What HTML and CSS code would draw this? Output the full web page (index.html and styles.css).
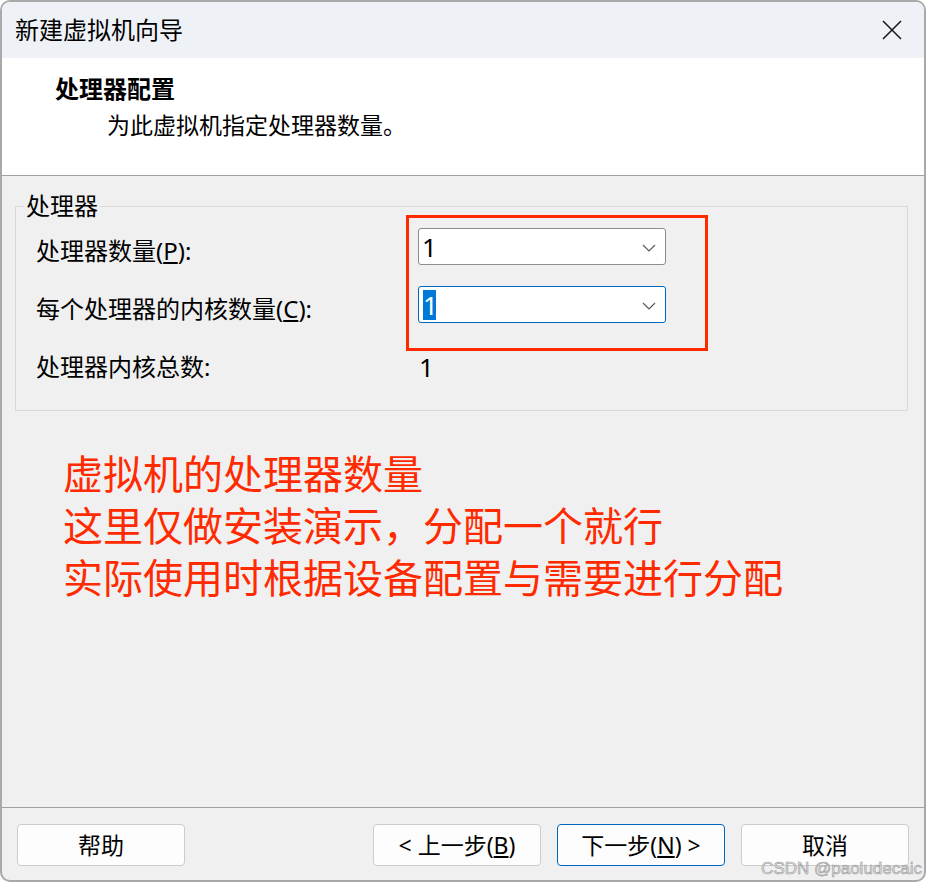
FILE: index.html
```html
<!DOCTYPE html>
<html lang="zh-CN">
<head>
    <meta charset="UTF-8">
    <title>新建虚拟机向导</title>
    <link rel="stylesheet" href="styles.css">
</head>
<body>
    <div class="window">
        <div class="titlebar">
            <span class="title">新建虚拟机向导</span>
            <svg class="close" width="20" height="20" viewBox="0 0 20 20">
                <path d="M1 1 L19 19 M19 1 L1 19" stroke="#1c1c1c" stroke-width="1.6" fill="none"/>
            </svg>
        </div>

        <div class="header">
            <h1>处理器配置</h1>
            <p>为此虚拟机指定处理器数量。</p>
        </div>

        <div class="content">
            <fieldset class="group">
                <legend>处理器</legend>
                <div class="form-grid">
                    <label class="field-label">处理器数量(<u>P</u>):</label>
                    <div class="combo">
                        <span class="value">1</span>
                        <svg class="chevron" width="14" height="8" viewBox="0 0 14 8">
                            <polyline points="1,1 7,7 13,1" stroke="#5a5a5a" stroke-width="1.2" fill="none"/>
                        </svg>
                    </div>

                    <label class="field-label">每个处理器的内核数量(<u>C</u>):</label>
                    <div class="combo focused">
                        <span class="value selected">1</span>
                        <svg class="chevron" width="14" height="8" viewBox="0 0 14 8">
                            <polyline points="1,1 7,7 13,1" stroke="#5a5a5a" stroke-width="1.2" fill="none"/>
                        </svg>
                    </div>

                    <span>处理器内核总数:</span>
                    <span class="total">1</span>
                </div>
            </fieldset>

            <!-- annotation drawn over the dialog -->
            <div class="mark-box"></div>

            <div class="note">
                <div>虚拟机的处理器数量</div>
                <div>这里仅做安装演示，分配一个就行</div>
                <div>实际使用时根据设备配置与需要进行分配</div>
            </div>
        </div>

        <div class="footer">
            <button>帮助</button>
            <div class="spacer"></div>
            <button>&lt; 上一步(<u>B</u>)</button>
            <button class="default">下一步(<u>N</u>) &gt;</button>
            <button>取消</button>
        </div>

        <div class="watermark">CSDN @paoludecaic</div>
    </div>
</body>
</html>
```

FILE: styles.css
```css
body {
    margin: 0;
    background-color: #ffffff;
    font-family: "Noto Sans", "Noto Sans CJK SC", sans-serif;
    color: #000000;
}

.window {
    position: relative;
    box-sizing: border-box;
    width: 926px;
    height: 882px;
    border: 2px solid #a9a9a9;
    border-radius: 10px;
    overflow: hidden;
    background-color: #f0f0f0;
    display: flex;
    flex-direction: column;
}

/* Title bar */
.titlebar {
    height: 56px;
    background-color: #eef2f6;
    display: flex;
    align-items: center;
    justify-content: space-between;
    padding: 0 22px 0 13px;
}

.title {
    font-size: 24px;
    line-height: 30px;
}

.close {
    display: block;
}

/* Header */
.header {
    background-color: #ffffff;
    height: 118px;
    box-sizing: border-box;
    border-bottom: 1px solid #a0a0a0;
    padding-top: 16px;
}

.header h1 {
    margin: 0 0 0 53px;
    font-size: 24px;
    line-height: 30px;
    font-weight: bold;
}

.header p {
    margin: 6px 0 0 105px;
    font-size: 23px;
    line-height: 30px;
}

/* Content */
.content {
    position: relative;
    flex: 1;
}

.group {
    margin: 16px 16px 0 13px;
    padding: 8px 0 20px 0;
    border: 1px solid #d9d9d9;
    min-width: 0;
}

.group legend {
    margin-left: 8px;
    padding: 0 2px;
    font-size: 24px;
    line-height: 28px;
}

.form-grid {
    display: grid;
    grid-template-columns: 382px 248px;
    grid-template-rows: 37px 37px 46px;
    row-gap: 21px;
    align-items: center;
    margin-left: 20px;
    font-size: 24px;
    line-height: 30px;
}

.field-label {
    margin-top: 8px;
}

.combo {
    box-sizing: border-box;
    height: 37px;
    border: 1px solid #8d8d8d;
    border-radius: 3px;
    background-color: #ffffff;
    display: flex;
    align-items: center;
    justify-content: space-between;
    padding: 0 9px 0 3px;
}

.combo.focused {
    border-color: #0067c0;
    padding-left: 4px;
}

.combo .value {
    font-size: 26px;
    line-height: 30px;
}

.combo .value.selected {
    display: inline-block;
    width: 13px;
    text-align: center;
    background-color: #0078d7;
    color: #ffffff;
}

.chevron {
    display: block;
    margin-top: 2px;
}

.total {
    font-size: 26px;
    padding-left: 1px;
}

.mark-box {
    position: absolute;
    left: 404px;
    top: 39px;
    width: 302px;
    height: 136px;
    box-sizing: border-box;
    border: 3px solid #ff2a00;
}

.note {
    margin: 37px 0 0 61px;
    font-size: 40px;
    line-height: 52px;
    color: #ff2a00;
}

/* Footer */
.footer {
    border-top: 1px solid #a0a0a0;
    padding: 16px 15px 14px 15px;
    display: flex;
    gap: 16px;
}

.spacer {
    flex: 1;
}

.footer button {
    width: 168px;
    height: 42px;
    border: 1px solid #cccccc;
    border-radius: 4px;
    background-color: #fdfdfd;
    font-family: "Noto Sans", "Noto Sans CJK SC", sans-serif;
    font-size: 23px;
    line-height: 30px;
    color: #000000;
    padding: 0;
}

.footer button.default {
    border-color: #0067c0;
}

.watermark {
    position: absolute;
    right: 2px;
    bottom: 1px;
    font-family: "Liberation Sans", Arial, sans-serif;
    font-size: 17px;
    color: #dedede;
    -webkit-text-stroke: 0.6px #9c9c9c;
}
```
